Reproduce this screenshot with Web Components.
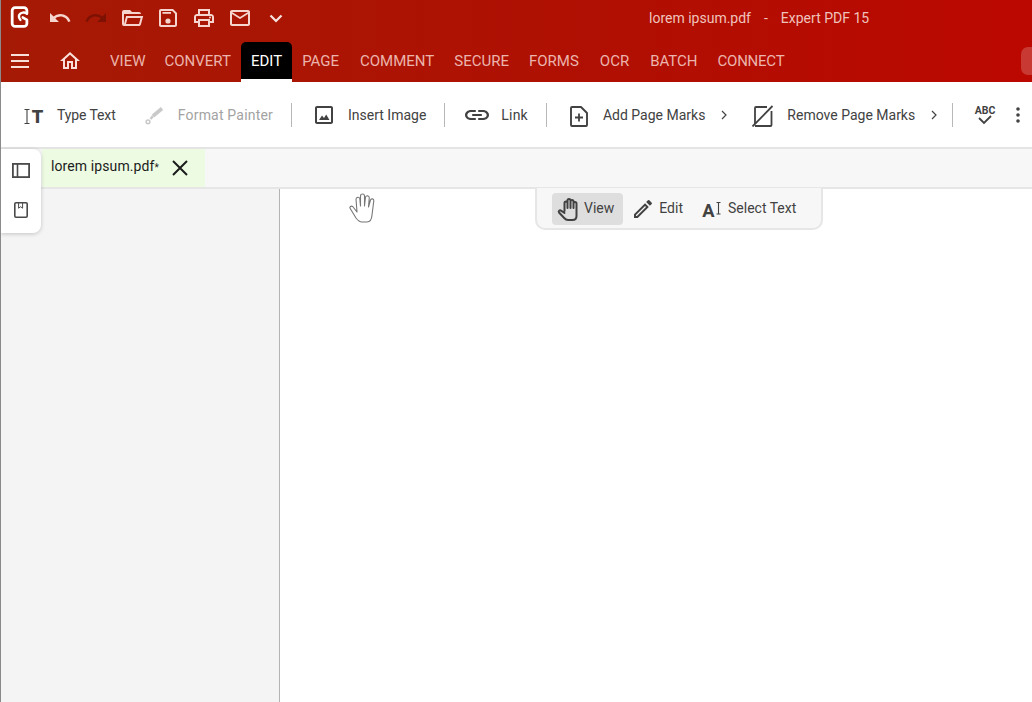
<!DOCTYPE html>
<html>
<head>
<meta charset="utf-8">
<title>Expert PDF 15</title>
<style>
  html, body { margin: 0; height: 100%; overflow: hidden; background: #fff; }
  body { font-family: Roboto, "Liberation Sans", sans-serif; }
</style>
</head>
<body>
<pdf-app>
  <title-bar slot="head" doc="lorem ipsum.pdf" product="Expert PDF 15"></title-bar>
  <menu-bar slot="head" active="EDIT" items="VIEW,CONVERT,EDIT,PAGE,COMMENT,SECURE,FORMS,OCR,BATCH,CONNECT"></menu-bar>
  <ribbon-bar slot="ribbon"></ribbon-bar>
  <tab-strip slot="tabs" name="lorem ipsum.pdf"></tab-strip>
  <side-rail slot="over"></side-rail>
  <mode-bar slot="over"></mode-bar>
  <hand-cursor slot="over"></hand-cursor>
</pdf-app>

<script>
// --- Icons (24 unit viewBox) ---
const ICONS = {
    undo: '<path d="M12.5 8c-2.65 0-5.05.99-6.9 2.6L2 7v9h9l-3.62-3.62c1.39-1.16 3.16-1.88 5.12-1.88 3.54 0 6.55 2.31 7.6 5.5l2.37-.78C21.08 11.03 17.15 8 12.5 8z"/>',
    redo: '<path d="M18.4 10.6C16.55 8.99 14.15 8 11.5 8c-4.65 0-8.58 3.03-9.96 7.22L3.9 16c1.05-3.19 4.05-5.5 7.6-5.5 1.95 0 3.73.72 5.12 1.88L13 16h9V7l-3.6 3.6z"/>',
    open: '<path d="M6.1 10L4 18V8h17a2 2 0 0 0-2-2h-7l-2-2H4a2 2 0 0 0-2 2v12a2 2 0 0 0 2 2h15c.9 0 1.7-.6 1.9-1.5L23.2 10H6.1M19 18H6l1.6-6h13L19 18z"/>',
    save: '<path d="M17 3H5c-1.11 0-2 .9-2 2v14c0 1.1.89 2 2 2h14c1.1 0 2-.9 2-2V7l-4-4zm2 16H5V5h11.17L19 7.83V19z"/><circle cx="12" cy="15" r="2.6"/><rect x="6.5" y="6" width="8.5" height="1.8"/>',
    print: '<path d="M19 8h-1V3H6v5H5c-1.66 0-3 1.34-3 3v6h4v4h12v-4h4v-6c0-1.66-1.34-3-3-3zM8 5h8v3H8V5zm8 12v2H8v-4h8v2zm2-2v-2H6v2H4v-4c0-.55.45-1 1-1h14c.55 0 1 .45 1 1v4h-2z"/><circle cx="18" cy="11.5" r="1"/>',
    mail: '<path d="M22 6c0-1.1-.9-2-2-2H4c-1.1 0-2 .9-2 2v12c0 1.1.9 2 2 2h16c1.1 0 2-.9 2-2V6zm-2 0l-8 5-8-5h16zm0 12H4V8l8 5 8-5v10z"/>',
    down: '<path d="M6.5 9.5L12 15l5.5-5.5" fill="none" stroke="currentColor" stroke-width="2.2"/>',
    menu: '<rect x="3" y="5" width="18" height="2"/><rect x="3" y="11" width="18" height="2"/><rect x="3" y="17" width="18" height="2"/>',
    home: '<path d="M12 5.69l5 4.5V18h-2v-6H9v6H7v-7.81l5-4.5M12 3L2 12h3v8h6v-6h2v6h6v-8h3L12 3z"/>',
    typetext: '<path d="M3.5 6.5h5M3.5 20.5h5M6 6.5v14" fill="none" stroke="currentColor" stroke-width="1.1"/><text x="16.5" y="20" text-anchor="middle" font-family="Roboto, sans-serif" font-weight="900" font-size="18.3">T</text>',
    brush: '<path d="M20 5.5L11 13" fill="none" stroke="currentColor" stroke-width="3.6"/><path d="M11 13l-2.5 3" fill="none" stroke="currentColor" stroke-width="2.4"/><circle cx="6" cy="18.8" r="1.9" fill="none" stroke="currentColor" stroke-width="1.5"/>',
    image: '<path d="M19 5v14H5V5h14m0-2H5c-1.1 0-2 .9-2 2v14c0 1.1.9 2 2 2h14c1.1 0 2-.9 2-2V5c0-1.1-.9-2-2-2z"/><path d="M7 17l3-4.5 2 2.5 2.2-3.5L17.5 17z"/>',
    link: '<g transform="translate(-2.4 0) scale(1.2 1)"><path d="M3.9 12c0-1.71 1.39-3.1 3.1-3.1h4V7H7c-2.76 0-5 2.24-5 5s2.24 5 5 5h4v-1.9H7c-1.71 0-3.1-1.39-3.1-3.1zM8 13h8v-2H8v2zm9-6h-4v1.9h4c1.71 0 3.1 1.39 3.1 3.1s-1.39 3.1-3.1 3.1h-4V17h4c2.76 0 5-2.24 5-5s-2.24-5-5-5z"/></g>',
    addpage: '<path d="M14 4H5a1 1 0 0 0-1 1v17a1 1 0 0 0 1 1h14a1 1 0 0 0 1-1V10z" fill="none" stroke="currentColor" stroke-width="1.9" stroke-linejoin="round"/><path d="M11.1 10.5h1.8v3.1H16v1.8h-3.1v3.1h-1.8v-3.1H8v-1.8h3.1z"/>',
    removepage: '<path d="M5 21V5a1 1 0 0 1 1-1h11M21.5 8v14a1 1 0 0 1-1 1H5" fill="none" stroke="currentColor" stroke-width="1.8"/><path d="M2.5 23.5L22.5 3" fill="none" stroke="currentColor" stroke-width="1.8"/>',
    spell: '<text x="12" y="10.5" text-anchor="middle" font-family="Roboto, sans-serif" font-weight="700" font-size="10.5">ABC</text><path d="M6 15l5 5 7-7" fill="none" stroke="currentColor" stroke-width="1.8"/>',
    dots: '<circle cx="12" cy="6" r="1.8"/><circle cx="12" cy="12" r="1.8"/><circle cx="12" cy="18" r="1.8"/>',
    panel: '<rect x="3.9" y="4.9" width="16.2" height="13.2" fill="none" stroke="currentColor" stroke-width="1.8"/><path d="M8.5 5v13" fill="none" stroke="currentColor" stroke-width="1.6"/>',
    bookmark: '<rect x="5.8" y="4.8" width="12.4" height="14.4" rx="1.2" fill="none" stroke="currentColor" stroke-width="1.6"/><path d="M9.6 5v5.2l2-1.5 2 1.5V5" fill="none" stroke="currentColor" stroke-width="1"/>',
    close: '<path d="M5 5l14 14M19 5L5 19" fill="none" stroke="currentColor" stroke-width="2"/>',
    hand: '<path d="M8.5 14V6a1.5 1.5 0 0 1 3 0v5M11.5 11V3.5a1.5 1.5 0 0 1 3 0V11M14.5 11V4.5a1.5 1.5 0 0 1 3 0V11M17.5 11V6.5a1.5 1.5 0 0 1 3 0V19c0 2.4-1.6 4-4 4H12c-1.6 0-2.8-.8-3.8-2L3 15.5c-.9-1.2.7-2.8 2-1.8L8.5 16" fill="none" stroke="currentColor" stroke-width="2" stroke-linecap="round" stroke-linejoin="round"/>',
    pencil: '<path d="M3 17.25V21h3.75L17.81 9.94l-3.75-3.75L3 17.25zM5.92 19H5v-.92l9.06-9.06.92.92L5.92 19zM20.71 7.04a.996.996 0 0 0 0-1.41l-2.34-2.34a1 1 0 0 0-1.41 0l-1.83 1.83 3.75 3.75 1.83-1.83z"/>',
    selecttext: '<text x="9.5" y="20" text-anchor="middle" font-family="Roboto, sans-serif" font-weight="700" font-size="18.3">A</text><path d="M17.5 5.5h4M17.5 17h4M19.5 5.5V17" fill="none" stroke="currentColor" stroke-width="1.1"/>',
    logo: '<path d="M17.9 9c-2-1.5-5.5-1-6.5 1-.7 1.5-.3 3 1 4.5" fill="none" stroke="currentColor" stroke-width="2" stroke-linecap="round"/><path d="M17.9 9V6.5A2.5 2.5 0 0 0 15.4 4H7.8a2.5 2.5 0 0 0-2.5 2.5v11A2.5 2.5 0 0 0 7.8 20h7.6a2.5 2.5 0 0 0 2.5-2.5v-3L14.5 12.5" fill="none" stroke="currentColor" stroke-width="2.4" stroke-linecap="round" stroke-linejoin="round"/>'
};

function icon(name, size) {
    return `<svg width="${size}" height="${size}" viewBox="0 0 24 24" fill="currentColor" aria-hidden="true">${ICONS[name]}</svg>`;
}

class PdfApp extends HTMLElement {
    constructor() {
        super();
        this.attachShadow({ mode: 'open' });
        this.shadowRoot.innerHTML = `
            <style>
                :host {
                    display: flex;
                    flex-direction: column;
                    position: relative;
                    width: 100%;
                    height: 100vh;
                    overflow: hidden;
                    box-sizing: border-box;
                    border-left: 1px solid #8a8a8a;
                }
                header {
                    margin-left: -1px;
                    background: linear-gradient(90deg, #a51a05 0%, #b00f02 60%, #bb0800 100%);
                }
                .body {
                    flex: 1;
                    display: flex;
                    min-height: 0;
                }
                .panel {
                    width: 278px;
                    background: #f4f4f4;
                    border-right: 1px solid #b4b4b4;
                }
                .page {
                    flex: 1;
                    background: #fff;
                }
            </style>
            <header><slot name="head"></slot></header>
            <slot name="ribbon"></slot>
            <slot name="tabs"></slot>
            <div class="body">
                <div class="panel"></div>
                <div class="page"></div>
            </div>
            <slot name="over"></slot>
        `;
    }
}

class TitleBar extends HTMLElement {
    constructor() {
        super();
        this.attachShadow({ mode: 'open' });
    }

    connectedCallback() {
        const tools = [
            ['undo', '#f6d5cf'],
            ['redo', '#7d1204'],
            ['open', '#f6d5cf'],
            ['save', '#f6d5cf'],
            ['print', '#f6d5cf'],
            ['mail', '#f6d5cf'],
            ['down', '#f6e3df']
        ];
        this.shadowRoot.innerHTML = `
            <style>
                :host {
                    display: flex;
                    align-items: center;
                    height: 38px;
                    box-sizing: border-box;
                    padding-bottom: 3px;
                    font: 14px Roboto, sans-serif;
                    color: #efc3bc;
                }
                .logo {
                    display: flex;
                    margin: -2px 0 0 6px;
                    color: #fff;
                }
                .tools {
                    display: flex;
                    gap: 12px;
                    margin-left: 14px;
                }
                .tools span { display: flex; }
                .title {
                    display: flex;
                    gap: 13px;
                    margin-left: 361px;
                }
                .title b { font-weight: 400; }
            </style>
            <span class="logo">${icon('logo', 28)}</span>
            <div class="tools">
                ${tools.map(t => `<span style="color:${t[1]}">${icon(t[0], 24)}</span>`).join('')}
            </div>
            <div class="title">
                <span>${this.getAttribute('doc')}</span><b>-</b><span>${this.getAttribute('product')}</span>
            </div>
        `;
    }
}

// small nudges so the labels land where the reference has them
const MENU_NUDGE = { VIEW: -1, PAGE: 1, FORMS: 1, OCR: 1 };

class MenuBar extends HTMLElement {
    constructor() {
        super();
        this.attachShadow({ mode: 'open' });
    }

    connectedCallback() {
        const active = this.getAttribute('active');
        const items = this.getAttribute('items').split(',');
        this.shadowRoot.innerHTML = `
            <style>
                :host {
                    display: flex;
                    align-items: stretch;
                    height: 44px;
                    box-sizing: border-box;
                    padding-top: 4px;
                    font: 15px Roboto, sans-serif;
                    color: #ebb4ac;
                }
                .ic {
                    display: flex;
                    align-items: center;
                    color: #f9dfda;
                    padding-bottom: 3px;
                }
                .burger { margin-left: 8px; }
                .home { margin-left: 26px; margin-right: 18px; }
                .item {
                    display: flex;
                    align-items: center;
                    padding: 0 10px 3px;
                }
                .item.on {
                    color: #fff;
                    background: #000;
                    border-radius: 5px 5px 0 0;
                    box-shadow: 0 3px 0 #fff;
                    margin-bottom: 3px;
                    padding-bottom: 0;
                }
                .item:last-of-type { letter-spacing: -.25px; }
                .end {
                    margin-left: auto;
                    width: 11px;
                    height: 28px;
                    align-self: center;
                    margin-top: -3px;
                    background: rgba(255, 255, 255, .2);
                    border-radius: 7px 0 0 7px;
                }
            </style>
            <span class="ic burger">${icon('menu', 24)}</span>
            <span class="ic home">${icon('home', 24)}</span>
            ${items.map(i => `<span class="item ${i === active ? 'on' : ''}" style="margin-right:${MENU_NUDGE[i] || 0}px">${i}</span>`).join('')}
            <i class="end"></i>
        `;
    }
}

class RibbonBar extends HTMLElement {
    constructor() {
        super();
        this.attachShadow({ mode: 'open' });
        const item = (ic, label, cls = '') => `<span class="item ${cls}">${icon(ic, 24)}<span>${label}</span></span>`;
        const chev = cls => `<svg class="chev ${cls}" width="6" height="10" viewBox="0 0 6 10"><path d="M1 1l4 4-4 4" fill="none" stroke="#444" stroke-width="1.2"/></svg>`;
        this.shadowRoot.innerHTML = `
            <style>
                :host {
                    display: flex;
                    align-items: center;
                    height: 67px;
                    box-sizing: border-box;
                    padding: 1px 0 0 20px;
                    background: #fff;
                    border-bottom: 2px solid #e4e4e4;
                    font: 14px Roboto, sans-serif;
                    color: #424242;
                    white-space: nowrap;
                    overflow: hidden;
                }
                .item {
                    display: flex;
                    align-items: center;
                    gap: 12px;
                }
                .item + .item { margin-left: 26px; }
                .tight span { letter-spacing: -.1px; }
                .wide span { letter-spacing: .2px; }
                .off { color: #a3a3a3; }
                .off svg { color: #c9c9c9; }
                .gap13 { gap: 13px; }
                .sep {
                    flex: none;
                    width: 1px;
                    height: 24px;
                    margin: 0 20px 0 18px;
                    background: #b8b8b8;
                }
                .chev { flex: none; margin: 0 23px 0 16px; }
                .chev.last { margin-right: 15px; }
                .chev.last + .sep { margin-left: 0; }
                .dots { display: flex; margin-left: 9px; color: #424242; }
            </style>
            ${item('typetext', 'Type Text', 'tight')}
            ${item('brush', 'Format Painter', 'off wide')}
            <span class="sep"></span>
            ${item('image', 'Insert Image')}
            <span class="sep"></span>
            ${item('link', 'Link', 'wide')}
            <span class="sep"></span>
            ${item('addpage', 'Add Page Marks')}
            ${chev('')}
            ${item('removepage', 'Remove Page Marks', 'gap13')}
            ${chev('last')}
            <span class="sep"></span>
            <span class="item">${icon('spell', 24)}</span>
            <span class="dots">${icon('dots', 24)}</span>
        `;
    }
}

class TabStrip extends HTMLElement {
    constructor() {
        super();
        this.attachShadow({ mode: 'open' });
    }

    connectedCallback() {
        this.shadowRoot.innerHTML = `
            <style>
                :host {
                    display: flex;
                    height: 38px;
                    padding-left: 41px;
                    background: #f7f7f7;
                    border-bottom: 2px solid #e6e6e6;
                    font: 14px Roboto, sans-serif;
                    color: #1c1c1c;
                }
                .tab {
                    display: flex;
                    align-items: center;
                    width: 163px;
                    box-sizing: border-box;
                    padding: 0 0 4px 9px;
                    background: #edfbe3;
                }
                .name { letter-spacing: .1px; }
                .star { font-size: 10px; }
                .x { display: flex; margin-left: 9px; margin-top: 4px; }
            </style>
            <div class="tab">
                <span class="name">${this.getAttribute('name')}<span class="star">*</span></span>
                <span class="x">${icon('close', 24)}</span>
            </div>
        `;
    }
}

class SideRail extends HTMLElement {
    constructor() {
        super();
        this.attachShadow({ mode: 'open' });
        this.shadowRoot.innerHTML = `
            <style>
                :host {
                    position: absolute;
                    left: 0;
                    top: 149px;
                    width: 40px;
                    height: 84px;
                    display: flex;
                    flex-direction: column;
                    align-items: center;
                    gap: 15px;
                    padding-top: 10px;
                    box-sizing: border-box;
                    background: #fff;
                    border-radius: 0 8px 8px 0;
                    box-shadow: 0 1px 4px rgba(0, 0, 0, .2);
                    color: #4a4a4a;
                }
                span { display: flex; }
            </style>
            <span>${icon('panel', 24)}</span>
            <span>${icon('bookmark', 24)}</span>
        `;
    }
}

class ModeBar extends HTMLElement {
    constructor() {
        super();
        this.attachShadow({ mode: 'open' });
        this.shadowRoot.innerHTML = `
            <style>
                :host {
                    position: absolute;
                    left: 534px;
                    top: 188px;
                    width: 288px;
                    height: 42px;
                    display: flex;
                    align-items: flex-start;
                    box-sizing: border-box;
                    padding: 5px 0 0 15px;
                    background: #f7f7f7;
                    border: 2px solid #e6e6e6;
                    border-top: 0;
                    border-radius: 0 0 10px 10px;
                    font: 14px Roboto, sans-serif;
                    color: #424242;
                }
                .btn {
                    display: flex;
                    align-items: center;
                    gap: 4px;
                    height: 32px;
                    padding: 0 8px;
                    border-radius: 4px;
                }
                .btn span { padding-bottom: 2px; }
                .on { background: #dedede; padding: 0 9px 0 4px; }
                .sel { gap: 5px; }
                svg { flex: none; }
            </style>
            <span class="btn on">${icon('hand', 24)}<span>View</span></span>
            <span class="btn">${icon('pencil', 24)}<span>Edit</span></span>
            <span class="btn sel">${icon('selecttext', 24)}<span>Select Text</span></span>
        `;
    }
}

class HandCursor extends HTMLElement {
    constructor() {
        super();
        this.attachShadow({ mode: 'open' });
        this.shadowRoot.innerHTML = `
            <style>
                :host {
                    position: absolute;
                    left: 348px;
                    top: 193px;
                    width: 27px;
                    height: 30px;
                    color: #777;
                }
                svg { display: block; }
            </style>
            <svg width="27" height="30" viewBox="0 0 27 30">
                <path d="M8 19L7 6a2 2 0 0 1 3.8-.5L11.5 13V3a2 2 0 0 1 4 0V13L16.5 4a2 2 0 0 1 3.8.5L19.5 14 21.5 7a1.7 1.7 0 0 1 3.3.7L23 22c-.3 4-1.5 7-5 7h-5c-3 0-4.5-2-6-4L1.2 15.5c-1-1.6 1-3 2.5-2L8 19" fill="#fff" stroke="currentColor" stroke-width="1.1" stroke-linecap="round" stroke-linejoin="round"/>
            </svg>
        `;
    }
}

customElements.define('pdf-app', PdfApp);
customElements.define('title-bar', TitleBar);
customElements.define('menu-bar', MenuBar);
customElements.define('ribbon-bar', RibbonBar);
customElements.define('tab-strip', TabStrip);
customElements.define('side-rail', SideRail);
customElements.define('mode-bar', ModeBar);
customElements.define('hand-cursor', HandCursor);
</script>
</body>
</html>
